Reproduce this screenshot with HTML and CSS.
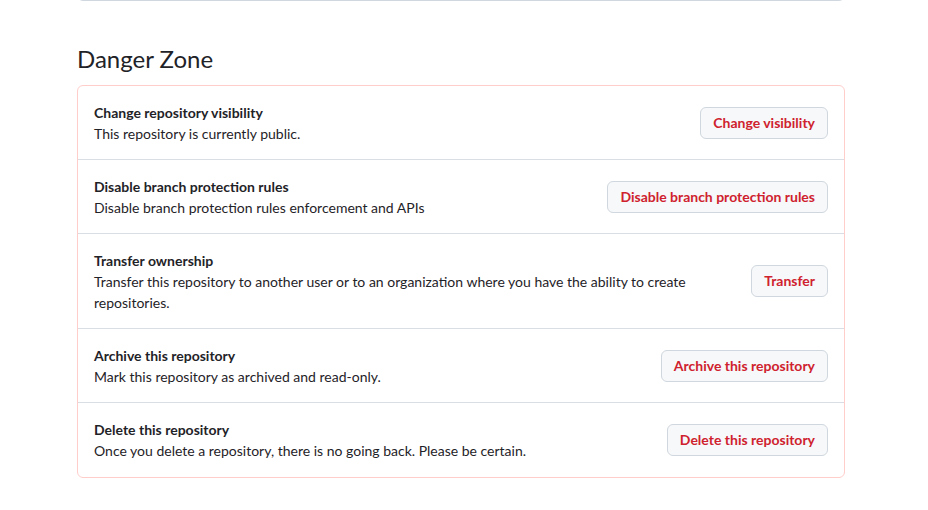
FILE: index.html
```html
<!DOCTYPE html>
<html lang="en">
<head>
<meta charset="utf-8">
<title>Danger Zone</title>
<link rel="stylesheet" href="styles.css">
</head>
<body>
<div class="page">
  <div class="prev-box"></div>
  <h2 class="subhead">Danger Zone</h2>
  <div class="danger-box">
    <div class="row">
      <div class="info">
        <div class="title">Change repository visibility</div>
        <p class="desc">This repository is currently public.</p>
      </div>
      <button class="btn-danger">Change visibility</button>
    </div>
    <div class="row">
      <div class="info">
        <div class="title">Disable branch protection rules</div>
        <p class="desc">Disable branch protection rules enforcement and APIs</p>
      </div>
      <button class="btn-danger">Disable branch protection rules</button>
    </div>
    <div class="row">
      <div class="info">
        <div class="title">Transfer ownership</div>
        <p class="desc">Transfer this repository to another user or to an organization where you have the ability to create repositories.</p>
      </div>
      <button class="btn-danger">Transfer</button>
    </div>
    <div class="row">
      <div class="info">
        <div class="title">Archive this repository</div>
        <p class="desc">Mark this repository as archived and read-only.</p>
      </div>
      <button class="btn-danger">Archive this repository</button>
    </div>
    <div class="row">
      <div class="info">
        <div class="title">Delete this repository</div>
        <p class="desc">Once you delete a repository, there is no going back. Please be certain.</p>
      </div>
      <button class="btn-danger">Delete this repository</button>
    </div>
  </div>
</div>
</body>
</html>
```

FILE: styles.css
```css
* { box-sizing: border-box; }
html, body { margin: 0; padding: 0; background: #ffffff; }
body {
  font-family: Lato, "Noto Sans", "Liberation Sans", sans-serif;
  font-size: 14px;
  line-height: 1.5;
  color: #1f2328;
}
.page {
  width: 768px;
  margin-left: 77px;
}
.prev-box {
  height: 20px;
  margin-top: -19px;
  border: 1px solid #d0d7de;
  border-radius: 0 0 6px 6px;
}
.subhead {
  margin: 40px 0 0;
  padding-bottom: 8px;
  font-size: 24px;
  font-weight: 400;
  line-height: 36px;
  color: #1f2328;
}
.danger-box {
  border: 1px solid #ffcecb;
  border-radius: 6px;
}
.row {
  display: flex;
  align-items: center;
  padding: 16px;
  border-top: 1px solid #d8dee4;
}
.row:first-child { border-top: none; }
.row:last-child { padding-bottom: 17px; }
.info { flex: 1; min-width: 0; margin: 1px 0 -1px; }
.title { font-weight: 700; line-height: 20px; }
.desc { margin: 0; line-height: 21px; }
.btn-danger {
  flex: none;
  margin-left: 16px;
  height: 32px;
  padding: 0 12px;
  font-family: inherit;
  font-size: 14px;
  font-weight: 700;
  line-height: 20px;
  color: #cf222e;
  background: #f6f8fa;
  border: 1px solid #d0d7de;
  border-radius: 6px;
  cursor: pointer;
}
```
